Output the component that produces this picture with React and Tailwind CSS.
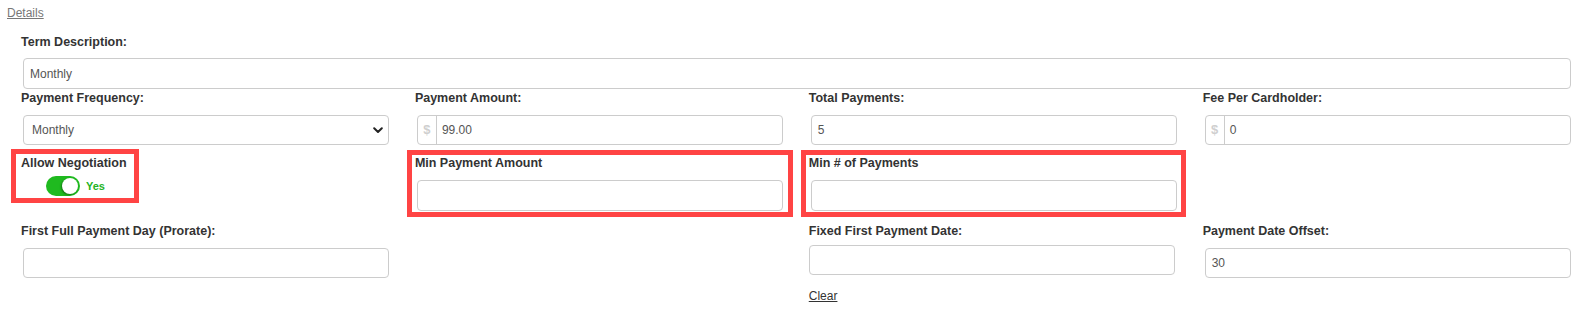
import React from "react";

function Label({ children }) {
  return <div className="h-4 text-[12.5px] font-bold leading-4 text-[#333]">{children}</div>;
}

function TextBox({ value = "", className = "" }) {
  return (
    <div
      className={`flex h-[30px] items-center rounded-[4px] border border-[#cccccc] bg-white px-[6px] text-[12px] text-[#555] ${className}`}
    >
      {value}
    </div>
  );
}

function MoneyBox({ value }) {
  return (
    <div className="mx-[2px] mt-[9px] flex h-[30px] items-stretch rounded-[4px] border border-[#cccccc] bg-white text-[12px]">
      <div className="flex w-[19px] items-center justify-center border-r border-[#cccccc] text-[13px] font-bold text-[#cfcfcf]">
        $
      </div>
      <div className="flex items-center pl-[5px] text-[#555]">{value}</div>
    </div>
  );
}

function SelectBox({ value }) {
  return (
    <div className="mx-[2px] mt-[9px] flex h-[30px] items-center justify-between rounded-[4px] border border-[#cccccc] bg-white pl-[8px] pr-[5px] text-[12px] text-[#555]">
      <span>{value}</span>
      <svg width="10" height="7" viewBox="0 0 10 7" fill="none">
        <path d="M1.2 1.3 L5 5 L8.8 1.3" stroke="#222" strokeWidth="2" strokeLinecap="round" strokeLinejoin="round" />
      </svg>
    </div>
  );
}

function Toggle() {
  return (
    <div className="ml-[25px] mt-[5px] flex items-center gap-[6px]">
      <div className="flex h-[20px] w-[34px] items-center justify-end rounded-full bg-[#1fba1f] pr-[2px]">
        <div className="h-[16px] w-[16px] rounded-full bg-white shadow-[-1px_1px_2px_rgba(0,0,0,0.35)]" />
      </div>
      <span className="text-[11px] font-bold text-[#24b424]">Yes</span>
    </div>
  );
}

export default function App() {
  return (
    <div className="h-[310px] w-[1585px] overflow-hidden bg-white font-['Liberation_Sans',Arial,sans-serif]">
      <div className="h-[21px] pl-[7px] pt-[5px] text-[12px] leading-4">
        <a href="#" className="block w-fit text-[#777] underline">
          Details
        </a>
      </div>

      <div className="pl-[21px] pr-[12px]">
        <div className="mt-[13px]">
          <Label>Term Description:</Label>
          <TextBox value="Monthly" className="mx-[2px] mt-[8px] h-[31px]" />
        </div>

        <div className="mt-[1px] grid grid-cols-4 gap-x-[23.5px]">
          <div>
            <Label>Payment Frequency:</Label>
            <SelectBox value="Monthly" />
          </div>
          <div>
            <Label>Payment Amount:</Label>
            <MoneyBox value="99.00" />
          </div>
          <div>
            <Label>Total Payments:</Label>
            <TextBox value="5" className="mx-[2px] mt-[9px]" />
          </div>
          <div>
            <Label>Fee Per Cardholder:</Label>
            <MoneyBox value="0" />
          </div>
        </div>

        <div className="mt-[10px] grid grid-cols-4 gap-x-[23.5px]">
          <div className="relative">
            <Label>Allow Negotiation</Label>
            <Toggle />
            <div className="absolute left-[-10px] top-[-6px] h-[54px] w-[128px] border-[5px] border-[#ff4444]" />
          </div>
          <div className="relative">
            <Label>Min Payment Amount</Label>
            <TextBox className="mx-[2px] mt-[9px] h-[31px]" />
            <div className="absolute -bottom-[6px] -left-[8px] -right-[8px] -top-[5px] border-[5px] border-[#ff4444]" />
          </div>
          <div className="relative">
            <Label>Min # of Payments</Label>
            <TextBox className="mx-[2px] mt-[9px] h-[31px]" />
            <div className="absolute -bottom-[6px] -left-[8px] -right-[7px] -top-[5px] border-[5px] border-[#ff4444]" />
          </div>
          <div />
        </div>

        <div className="mt-[12px] grid grid-cols-4 gap-x-[23.5px]">
          <div>
            <Label>First Full Payment Day (Prorate):</Label>
            <TextBox className="mx-[2px] mt-[9px]" />
          </div>
          <div />
          <div>
            <Label>Fixed First Payment Date:</Label>
            <TextBox className="mt-[6px] w-[366px]" />
            <a href="#" className="mt-[13px] block w-fit text-[12px] leading-4 text-[#333] underline">
              Clear
            </a>
          </div>
          <div>
            <Label>Payment Date Offset:</Label>
            <TextBox value="30" className="mx-[2px] mt-[9px]" />
          </div>
        </div>
      </div>
    </div>
  );
}
